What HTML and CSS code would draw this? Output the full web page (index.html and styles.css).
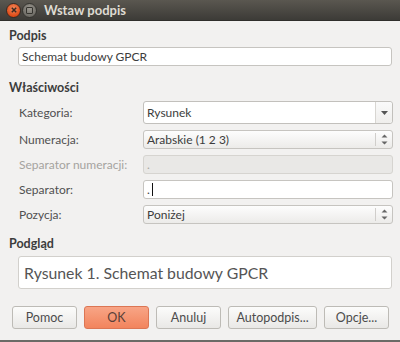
FILE: index.html
```html
<!DOCTYPE html>
<html lang="pl">
<head>
  <meta charset="UTF-8" />
  <title>Wstaw podpis</title>
  <link rel="stylesheet" href="styles.css">
</head>
<body>
  <div class="window">
    <div class="titlebar">
      <span class="wbtn close">
        <svg width="8" height="8" viewBox="0 0 8 8"><path d="M1.8 1.8 L6.2 6.2 M6.2 1.8 L1.8 6.2" stroke="#3a2a22" stroke-width="1.5"/></svg>
      </span>
      <span class="wbtn mini"><span class="sq"></span></span>
      <span class="title">Wstaw podpis</span>
    </div>

    <div class="content">
      <div class="heading">Podpis</div>
      <div class="entry wide">Schemat budowy GPCR</div>

      <div class="heading props">Właściwości</div>
      <div class="form">
        <label>Kategoria:</label>
        <div class="combo">
          <span class="val">Rysunek</span>
          <span class="drop"><svg width="7" height="4" viewBox="0 0 7 4"><path d="M0 0 H7 L3.5 4 Z" fill="#555"/></svg></span>
        </div>

        <label>Numeracja:</label>
        <div class="spin">
          <span class="val">Arabskie (1 2 3)</span>
          <span class="arrows">
            <svg width="7" height="11" viewBox="0 0 7 11"><path d="M0.5 3.5 H6.5 L3.5 0.5 Z M0.5 7.5 H6.5 L3.5 10.5 Z" fill="#666"/></svg>
          </span>
        </div>

        <label class="off">Separator numeracji:</label>
        <div class="entry disabled">.</div>

        <label>Separator:</label>
        <div class="entry">.<span class="caret"></span></div>

        <label>Pozycja:</label>
        <div class="spin">
          <span class="val">Poniżej</span>
          <span class="arrows">
            <svg width="7" height="11" viewBox="0 0 7 11"><path d="M0.5 3.5 H6.5 L3.5 0.5 Z M0.5 7.5 H6.5 L3.5 10.5 Z" fill="#666"/></svg>
          </span>
        </div>
      </div>

      <div class="heading preview-head">Podgląd</div>
      <div class="preview">Rysunek 1. Schemat budowy GPCR</div>

      <div class="buttons">
        <button class="btn">Pomoc</button>
        <button class="btn ok">OK</button>
        <button class="btn">Anuluj</button>
        <button class="btn long">Autopodpis...</button>
        <button class="btn">Opcje...</button>
      </div>
    </div>
  </div>
</body>
</html>
```

FILE: styles.css
```css
body {
  margin: 0;
  font-family: Lato, "Open Sans", sans-serif;
  font-size: 12px;
  color: #3c3c3c;
  background: #f2f1f0;
}

.window {
  width: 400px;
  height: 342px;
  background: #f2f1f0;
  border-bottom: 2px solid #6b6a66;
  box-sizing: border-box;
  overflow: hidden;
}

.titlebar {
  height: 21px;
  display: flex;
  align-items: center;
  background: linear-gradient(#5a5750, #3c3b37);
  border-bottom: 1px solid #2f2e2b;
  box-sizing: border-box;
  padding-left: 6px;
}

.wbtn {
  width: 15px;
  height: 15px;
  border-radius: 50%;
  display: flex;
  align-items: center;
  justify-content: center;
  box-sizing: border-box;
}

.close {
  background: radial-gradient(circle at 50% 35%, #f58a5c, #dd4814 75%);
  border: 1px solid #3a2a22;
}

.mini {
  margin-left: 1px;
  background: radial-gradient(circle at 50% 35%, #9a978f, #6c6a64 75%);
  border: 1px solid #35342f;
}

.sq {
  width: 5px;
  height: 5px;
  border: 1px solid #35342f;
  border-radius: 1px;
}

.title {
  color: #dfdbd2;
  font-weight: bold;
  font-size: 13px;
  margin-left: 7px;
}

.content {
  padding: 6px 8px 0 9px;
}

.heading {
  font-weight: bold;
  font-size: 12.5px;
  height: 17px;
  line-height: 17px;
}

.props {
  margin-top: 13px;
}

.entry {
  height: 19px;
  box-sizing: border-box;
  background: #fff;
  border: 1px solid #c6c4c0;
  border-radius: 3px;
  padding-left: 3px;
  line-height: 17px;
  display: flex;
  align-items: center;
}

.entry.wide {
  margin: 3px 0 0 9px;
  width: 374px;
}

.entry.disabled {
  background: #e9e8e6;
  border-color: #d6d4d0;
  color: #a8a6a2;
}

.caret {
  width: 1px;
  height: 13px;
  background: #111;
  margin-left: 2px;
}

.form {
  display: grid;
  grid-template-columns: 124px 250px;
  grid-template-rows: 23px 19px 19px 19px 19px;
  row-gap: 6px;
  margin: 5px 0 0 10px;
  align-items: center;
}

.form label {
  color: #505050;
}

.form label.off {
  color: #a5a39f;
}

.combo {
  height: 23px;
  box-sizing: border-box;
  border: 1px solid #c2c0bc;
  border-radius: 3px;
  background: #fff;
  display: flex;
  align-items: center;
}

.val {
  flex: 1;
  padding-left: 3px;
}

.drop {
  width: 16px;
  height: 100%;
  border-left: 1px solid #d8d6d2;
  background: linear-gradient(#fafafa, #efeeec);
  display: flex;
  align-items: center;
  justify-content: center;
  border-radius: 0 3px 3px 0;
}

.spin {
  height: 19px;
  box-sizing: border-box;
  border: 1px solid #c6c4c0;
  border-radius: 3px;
  background: linear-gradient(#fdfdfd, #ecebe9);
  display: flex;
  align-items: center;
}

.arrows {
  width: 16px;
  height: 13px;
  border-left: 1px solid #d0cecb;
  display: flex;
  align-items: center;
  justify-content: center;
}

.preview-head {
  margin-top: 11px;
}

.preview {
  margin: 4px 0 0 9px;
  width: 374px;
  height: 33px;
  box-sizing: border-box;
  background: #fff;
  border: 1px solid #d2d0cc;
  border-radius: 3px;
  padding-left: 5px;
  font-size: 15.8px;
  line-height: 31px;
  color: #555;
}

.buttons {
  display: flex;
  gap: 7px;
  margin: 17px 0 0 3px;
}

.btn {
  width: 65px;
  height: 23px;
  font-family: inherit;
  font-size: 12.5px;
  color: #4c4c4c;
  border: 1px solid #bdbbb6;
  border-radius: 3px;
  background: linear-gradient(#fcfcfb, #e9e8e6);
  padding: 0;
}

.btn.ok {
  background: linear-gradient(#f8a586, #f2845d);
  border-color: #dc7654;
  color: #5a4038;
}

.btn.long {
  width: 89px;
}
```
